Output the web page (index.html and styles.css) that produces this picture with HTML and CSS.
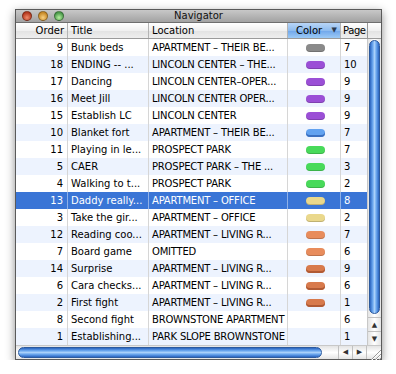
FILE: index.html
```html
<!DOCTYPE html>
<html>
<head>
<meta charset="utf-8">
<link rel="stylesheet" href="styles.css">
</head>
<body>
<div class="window">
  <div class="titlebar">
    <div class="lights">
      <span class="light red"></span>
      <span class="light yellow"></span>
      <span class="light green"></span>
    </div>
    <div class="title">Navigator</div>
  </div>
  <div class="content">
    <div class="main">
      <div class="header">
        <div class="hcell order">Order</div>
        <div class="hcell">Title</div>
        <div class="hcell">Location</div>
        <div class="hcell sorted">Color<span class="arrow">▼</span></div>
        <div class="hcell page">Page</div>
        <div class="hcell corner"></div>
      </div>
      <div class="body">
        <div class="rows">
          <div class="row"><div class="cell num">9</div><div class="cell">Bunk beds</div><div class="cell loc">APARTMENT – THEIR BE...</div><div class="cell color"><span class="pill gray"></span></div><div class="cell">7</div></div>
          <div class="row"><div class="cell num">18</div><div class="cell">ENDING -- ...</div><div class="cell loc">LINCOLN CENTER – THE...</div><div class="cell color"><span class="pill purple"></span></div><div class="cell">10</div></div>
          <div class="row"><div class="cell num">17</div><div class="cell">Dancing</div><div class="cell loc">LINCOLN CENTER–OPER...</div><div class="cell color"><span class="pill purple"></span></div><div class="cell">9</div></div>
          <div class="row"><div class="cell num">16</div><div class="cell">Meet Jill</div><div class="cell loc">LINCOLN CENTER OPER...</div><div class="cell color"><span class="pill purple"></span></div><div class="cell">9</div></div>
          <div class="row"><div class="cell num">15</div><div class="cell">Establish LC</div><div class="cell loc">LINCOLN CENTER</div><div class="cell color"><span class="pill purple"></span></div><div class="cell">9</div></div>
          <div class="row"><div class="cell num">10</div><div class="cell">Blanket fort</div><div class="cell loc">APARTMENT – THEIR BE...</div><div class="cell color"><span class="pill blue"></span></div><div class="cell">7</div></div>
          <div class="row"><div class="cell num">11</div><div class="cell">Playing in le...</div><div class="cell loc">PROSPECT PARK</div><div class="cell color"><span class="pill green"></span></div><div class="cell">7</div></div>
          <div class="row"><div class="cell num">5</div><div class="cell">CAER</div><div class="cell loc">PROSPECT PARK – THE ...</div><div class="cell color"><span class="pill green"></span></div><div class="cell">3</div></div>
          <div class="row"><div class="cell num">4</div><div class="cell">Walking to t...</div><div class="cell loc">PROSPECT PARK</div><div class="cell color"><span class="pill green"></span></div><div class="cell">2</div></div>
          <div class="row selected"><div class="cell num">13</div><div class="cell">Daddy really...</div><div class="cell loc">APARTMENT – OFFICE</div><div class="cell color"><span class="pill yellow"></span></div><div class="cell">8</div></div>
          <div class="row"><div class="cell num">3</div><div class="cell">Take the gir...</div><div class="cell loc">APARTMENT – OFFICE</div><div class="cell color"><span class="pill yellow"></span></div><div class="cell">2</div></div>
          <div class="row"><div class="cell num">12</div><div class="cell">Reading coo...</div><div class="cell loc">APARTMENT – LIVING R...</div><div class="cell color"><span class="pill orange"></span></div><div class="cell">7</div></div>
          <div class="row"><div class="cell num">7</div><div class="cell">Board game</div><div class="cell loc">OMITTED</div><div class="cell color"><span class="pill orange"></span></div><div class="cell">6</div></div>
          <div class="row"><div class="cell num">14</div><div class="cell">Surprise</div><div class="cell loc">APARTMENT – LIVING R...</div><div class="cell color"><span class="pill rust"></span></div><div class="cell">9</div></div>
          <div class="row"><div class="cell num">6</div><div class="cell">Cara checks...</div><div class="cell loc">APARTMENT – LIVING R...</div><div class="cell color"><span class="pill rust"></span></div><div class="cell">6</div></div>
          <div class="row"><div class="cell num">2</div><div class="cell">First fight</div><div class="cell loc">APARTMENT – LIVING R...</div><div class="cell color"><span class="pill rust"></span></div><div class="cell">1</div></div>
          <div class="row"><div class="cell num">8</div><div class="cell">Second fight</div><div class="cell loc">BROWNSTONE APARTMENT</div><div class="cell color"></div><div class="cell">6</div></div>
          <div class="row"><div class="cell num">1</div><div class="cell">Establishing...</div><div class="cell loc">PARK SLOPE BROWNSTONE</div><div class="cell color"></div><div class="cell">1</div></div>
        </div>
        <div class="vscroll">
          <div class="vtrack"><div class="vthumb"></div></div>
          <div class="vbtn">▲</div>
          <div class="vbtn">▼</div>
        </div>
      </div>
      <div class="hscroll">
        <div class="htrack"><div class="hthumb"></div></div>
        <div class="hbtn">◀</div>
        <div class="hbtn">▶</div>
        <div class="grip">
          <svg width="15" height="15" viewBox="0 0 15 15"><path d="M4 14 L14 4 M8 14 L14 8 M12 14 L14 12" stroke="#9a9a9a" stroke-width="1" fill="none"/><path d="M5 14 L14 5 M9 14 L14 9" stroke="#fff" stroke-width="1" fill="none"/></svg>
        </div>
      </div>
    </div>
  </div>
</div>
</body>
</html>
```

FILE: styles.css
```css
* { box-sizing: border-box; }
html, body { margin: 0; padding: 0; background: #fff; }
body {
  font-family: "DejaVu Sans", sans-serif;
  font-size: 10px;
  color: #000;
  padding: 9px 0 0 15px;
}
.window {
  width: 367px;
  border: 1px solid #5a5a5a;
  box-shadow: 0 3px 9px rgba(0,0,0,0.45);
  background: #fff;
}
.titlebar {
  height: 13px;
  background: linear-gradient(#c8c8c8, #a2a2a2);
  border-bottom: 1px solid #6e6e6e;
  display: flex;
  align-items: center;
  position: relative;
}
.lights { display: flex; gap: 6px; padding-left: 6px; }
.light {
  width: 10px; height: 10px; border-radius: 50%;
  border: 1px solid rgba(0,0,0,0.35);
}
.light.red { background: radial-gradient(circle at 50% 70%, #f08a6a, #b53a20 70%); }
.light.yellow { background: radial-gradient(circle at 50% 70%, #f8d080, #c88a28 70%); }
.light.green { background: radial-gradient(circle at 50% 70%, #b8f0a0, #4a9a4a 70%); }
.title {
  position: absolute; left: 0; right: 0; top: 0;
  text-align: center; font-size: 10px; line-height: 12px; color: #111;
}
.header {
  display: grid;
  grid-template-columns: 52px 81px 139px 53px 26px 14px;
  height: 16px;
  background: linear-gradient(#ffffff, #f0f0f0 50%, #e2e2e2 51%, #eeeeee);
  border-bottom: 1px solid #9a9a9a;
}
.hcell {
  line-height: 15px;
  padding-left: 3px;
  border-right: 1px solid #b4b4b4;
  white-space: nowrap;
  overflow: hidden;
}
.hcell.order { text-align: right; padding-right: 3px; }
.hcell.sorted {
  background: linear-gradient(#b9d6f7, #8ebcef 50%, #6fa6eb 51%, #9ccaf6);
  padding-left: 8px;
  position: relative;
}
.hcell.sorted .arrow { position: absolute; right: 3px; top: 0; font-size: 7px; color: #2a3a50; }
.hcell.page { border-right: none; padding-left: 2px; overflow: visible; letter-spacing: -0.4px; }
.hcell.corner { border-right: none; border-left: 1px solid #9a9a9a; }
.body { display: flex; }
.rows { width: 351px; }
.row {
  display: grid;
  grid-template-columns: 52px 81px 139px 53px 26px;
  height: 17px;
}
.row:nth-child(even) { background: #edf3fe; }
.row.selected { background: #3a75d6; color: #fff; }
.cell {
  line-height: 17px;
  padding-left: 3px;
  border-right: 1px solid #d6d6d6;
  white-space: nowrap;
  overflow: hidden;
}
.cell.loc { letter-spacing: -0.2px; }
.row .cell:last-child { border-right: none; }
.row.selected .cell { border-right-color: #8fb1e8; }
.cell.num { text-align: right; padding-right: 4px; }
.cell.color { display: flex; align-items: center; justify-content: center; }
.pill {
  width: 19px; height: 8px; border-radius: 4px;
  box-shadow: inset 0 -1px 0 rgba(0,0,0,0.18);
}
.pill.gray { background: #8a8a8a; }
.pill.purple { background: #9b4fd6; }
.pill.blue { background: #62a2f0; box-shadow: inset 0 -2px 0 #3a6fc0; }
.pill.green { background: #48da5a; }
.pill.yellow { background: #ead88c; }
.pill.orange { background: #e88c5c; }
.pill.rust { background: #d87a4c; box-shadow: inset 0 -2px 0 #b05a34; }
.vscroll {
  width: 14px;
  border-left: 1px solid #c8c8c8;
  display: flex; flex-direction: column;
  background: linear-gradient(90deg, #e4e4e4, #ffffff 50%, #e4e4e4);
}
.vtrack { height: 278px; padding: 1px 1px 0 1px; }
.vthumb {
  height: 274px;
  border-radius: 6px;
  background: linear-gradient(90deg, #2a64c0, #6aa6ee 30%, #a9d0fa 50%, #6aa6ee 70%, #2a64c0);
  border: 1px solid #2c5a9e;
}
.vbtn {
  height: 14px;
  font-size: 7px; line-height: 14px; text-align: center; color: #333;
  border-top: 1px solid #c0c0c0;
}
.hscroll {
  display: flex; height: 14px;
  border-top: 1px solid #c8c8c8;
  background: linear-gradient(#e4e4e4, #ffffff 50%, #e4e4e4);
}
.htrack { width: 323px; padding: 1px 0 0 2px; }
.hthumb {
  width: 304px; height: 11px;
  border-radius: 6px;
  background: linear-gradient(#2a64c0, #6aa6ee 30%, #a9d0fa 50%, #6aa6ee 70%, #2a64c0);
  border: 1px solid #2c5a9e;
}
.hbtn {
  width: 14px;
  font-size: 7px; line-height: 13px; text-align: center; color: #333;
  border-left: 1px solid #c0c0c0;
}
.grip { width: 15px; border-left: 1px solid #c0c0c0; }
```
